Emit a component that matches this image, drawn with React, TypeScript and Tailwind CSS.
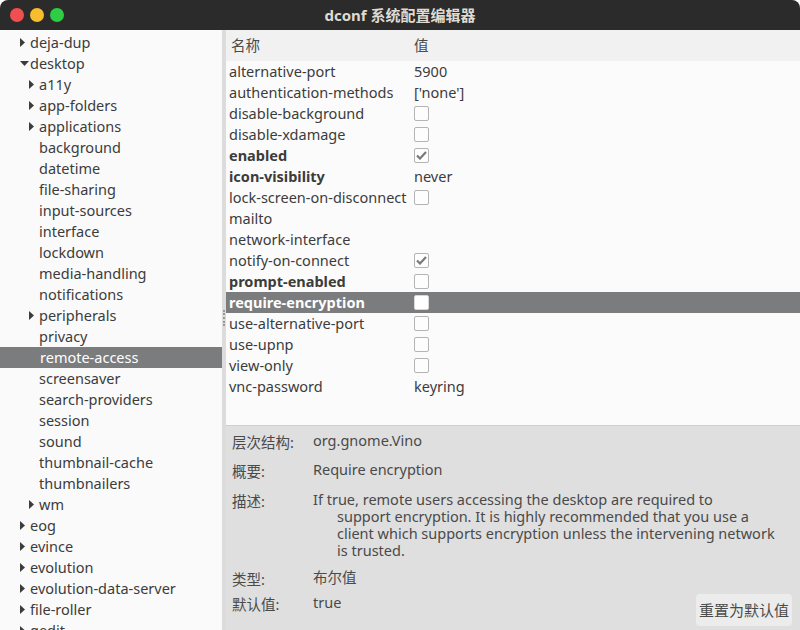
import React from "react";

type Item = { label: string; level: number; arrow?: "right" | "down"; selected?: boolean };

const tree: Item[] = [
  { label: "deja-dup", level: 0, arrow: "right" },
  { label: "desktop", level: 0, arrow: "down" },
  { label: "a11y", level: 1, arrow: "right" },
  { label: "app-folders", level: 1, arrow: "right" },
  { label: "applications", level: 1, arrow: "right" },
  { label: "background", level: 1 },
  { label: "datetime", level: 1 },
  { label: "file-sharing", level: 1 },
  { label: "input-sources", level: 1 },
  { label: "interface", level: 1 },
  { label: "lockdown", level: 1 },
  { label: "media-handling", level: 1 },
  { label: "notifications", level: 1 },
  { label: "peripherals", level: 1, arrow: "right" },
  { label: "privacy", level: 1 },
  { label: "remote-access", level: 1, selected: true },
  { label: "screensaver", level: 1 },
  { label: "search-providers", level: 1 },
  { label: "session", level: 1 },
  { label: "sound", level: 1 },
  { label: "thumbnail-cache", level: 1 },
  { label: "thumbnailers", level: 1 },
  { label: "wm", level: 1, arrow: "right" },
  { label: "eog", level: 0, arrow: "right" },
  { label: "evince", level: 0, arrow: "right" },
  { label: "evolution", level: 0, arrow: "right" },
  { label: "evolution-data-server", level: 0, arrow: "right" },
  { label: "file-roller", level: 0, arrow: "right" },
  { label: "gedit", level: 0, arrow: "right" },
];

type Row = { name: string; bold?: boolean; value?: string; check?: "on" | "off"; selected?: boolean };

const rows: Row[] = [
  { name: "alternative-port", value: "5900" },
  { name: "authentication-methods", value: "['none']" },
  { name: "disable-background", check: "off" },
  { name: "disable-xdamage", check: "off" },
  { name: "enabled", bold: true, check: "on" },
  { name: "icon-visibility", bold: true, value: "never" },
  { name: "lock-screen-on-disconnect", check: "off" },
  { name: "mailto" },
  { name: "network-interface" },
  { name: "notify-on-connect", check: "on" },
  { name: "prompt-enabled", bold: true, check: "off" },
  { name: "require-encryption", bold: true, check: "off", selected: true },
  { name: "use-alternative-port", check: "off" },
  { name: "use-upnp", check: "off" },
  { name: "view-only", check: "off" },
  { name: "vnc-password", value: "keyring" },
];

const font = { fontFamily: '"Noto Sans", "Noto Sans CJK SC", sans-serif' };

function Arrow({ dir }: { dir: "right" | "down" }) {
  if (dir === "right")
    return (
      <svg width="5" height="9" viewBox="0 0 5 9" className="block">
        <path d="M0 0 L5 4.5 L0 9 Z" fill="#3c3c3c" />
      </svg>
    );
  return (
    <svg width="9" height="5" viewBox="0 0 9 5" className="block">
      <path d="M0 0 L9 0 L4.5 5 Z" fill="#3c3c3c" />
    </svg>
  );
}

function Check({ on, sel }: { on: boolean; sel?: boolean }) {
  return (
    <div
      className={`w-[15px] h-[15px] rounded-[2px] border flex items-center justify-center ${
        sel ? "border-[#d8d8d8] bg-white" : "border-[#b4b4b4] bg-[#fdfdfd]"
      }`}
    >
      {on && (
        <svg width="11" height="9" viewBox="0 0 11 9">
          <path d="M1 4.5 L4 7.5 L10 1" stroke="#7a7a7a" strokeWidth="2.2" fill="none" />
        </svg>
      )}
    </div>
  );
}

function Label({ children }: { children: React.ReactNode }) {
  return <div className="w-[81px] shrink-0 translate-y-[2px]">{children}</div>;
}

export default function App() {
  return (
    <div className="w-[800px] h-[630px] flex flex-col overflow-hidden bg-white text-[#3c3c3c]" style={font}>
      {/* Title bar */}
      <div className="h-[30px] shrink-0 bg-[#2b2b2b] rounded-t-[8px] flex items-center relative">
        <div className="flex items-center gap-[6px] pl-[10px]">
          <div className="w-[14px] h-[14px] rounded-full bg-[#f14f4f]" />
          <div className="w-[14px] h-[14px] rounded-full bg-[#f6be2c]" />
          <div className="w-[14px] h-[14px] rounded-full bg-[#2ece44]" />
        </div>
        <div className="absolute inset-0 flex items-center justify-center text-[15px] font-bold text-[#dfdbd2]">
          dconf 系统配置编辑器
        </div>
      </div>

      <div className="flex flex-1 min-h-0">
        {/* Sidebar */}
        <div className="w-[222px] shrink-0 bg-[#fafafa] pt-[2px] overflow-hidden">
          {tree.map((it) => (
            <div
              key={it.label}
              className={`h-[21px] flex items-center text-[14.5px] leading-none ${
                it.selected ? "bg-[#7b7c7e] text-white" : ""
              }`}
              style={{ paddingLeft: it.level === 0 ? 18 : 27 }}
            >
              <div className="w-[12px] flex items-center justify-start pl-[2px]">
                {it.arrow && <Arrow dir={it.arrow} />}
              </div>
              <span className={it.selected ? "pl-[1px]" : ""}>{it.label}</span>
            </div>
          ))}
        </div>

        {/* Pane handle */}
        <div className="w-[4px] shrink-0 bg-[#dcdcdc] flex flex-col items-center pt-[280px]">
          <div className="w-[2px] h-[16px] border-l-2 border-dotted border-[#9a9a9a]" />
        </div>

        {/* Right */}
        <div className="flex-1 flex flex-col min-w-0">
          <div className="h-[395px] shrink-0 bg-[#fbfbfb] flex flex-col">
            <div className="h-[31px] bg-[#f1f1f1] flex items-center text-[14.5px] text-[#4a4a4a]">
              <div className="w-[188px] pl-[5px]">名称</div>
              <div>值</div>
            </div>
            {rows.map((r) => (
              <div
                key={r.name}
                className={`h-[21px] flex items-center text-[14.5px] leading-none ${
                  r.selected ? "bg-[#7b7c7e] text-white" : ""
                }`}
              >
                <div className={`w-[188px] pl-[3px] whitespace-nowrap ${r.bold ? "font-bold" : ""}`}>{r.name}</div>
                <div>
                  {r.check ? <Check on={r.check === "on"} sel={r.selected} /> : r.value}
                </div>
              </div>
            ))}
          </div>

          {/* Details panel */}
          <div className="flex-1 bg-[#dfdfdf] border-t border-[#cfcfcf] pl-[6px] pt-[6px] text-[14.5px] text-[#4a4a4a] leading-[17px] whitespace-nowrap">
            <div className="flex">
              <Label>层次结构:</Label>
              <div>org.gnome.Vino</div>
            </div>
            <div className="flex mt-[12px]">
              <Label>概要:</Label>
              <div>Require encryption</div>
            </div>
            <div className="flex mt-[13px]">
              <Label>描述:</Label>
              <div>
                <div>If true, remote users accessing the desktop are required to</div>
                <div className="pl-[24px]">support encryption. It is highly recommended that you use a</div>
                <div className="pl-[24px]">client which supports encryption unless the intervening network</div>
                <div className="pl-[24px]">is trusted.</div>
              </div>
            </div>
            <div className="flex mt-[10px]">
              <Label>类型:</Label>
              <div>布尔值</div>
            </div>
            <div className="flex mt-[8px] items-start">
              <Label>默认值:</Label>
              <div>true</div>
              <button className="ml-auto mr-[8px] w-[96px] h-[32px] rounded-[4px] bg-[#ececec] text-[15px] text-[#4a4a4a]">
                重置为默认值
              </button>
            </div>
          </div>
        </div>
      </div>
    </div>
  );
}
